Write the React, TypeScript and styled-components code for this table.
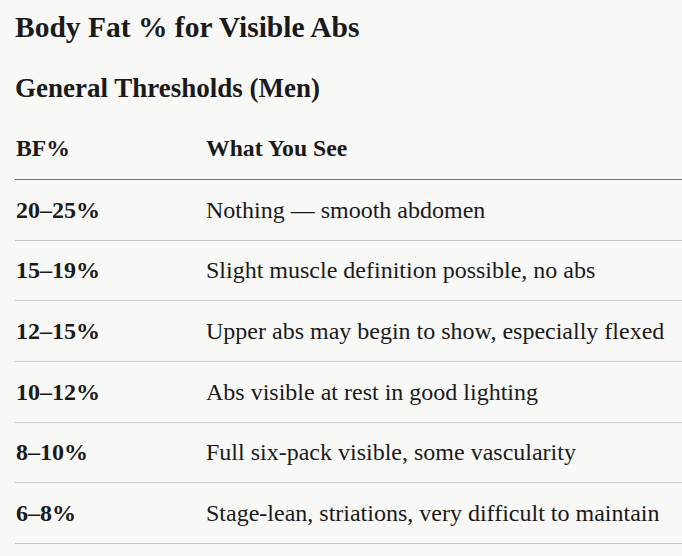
import React from "react";
import styled, { createGlobalStyle } from "styled-components";

const Global = createGlobalStyle`
  html, body { margin: 0; padding: 0; background: #f8f8f6; }
  body { font-family: "Liberation Serif", "DejaVu Serif", serif; color: #1a1a1a; }
`;

const Page = styled.div`
  padding: 9px 0 0 15px;
  overflow: hidden;
`;

const Title = styled.h1`
  margin: 0;
  font-size: 29.5px;
  font-weight: 700;
  line-height: 36px;
`;

const Subtitle = styled.h2`
  margin: 27px 0 0;
  font-size: 27px;
  font-weight: 700;
  line-height: 32px;
`;

const Table = styled.table`
  margin-top: 30px;
  width: 667px;
  border-collapse: collapse;
`;

const HeadCell = styled.th<{ $w?: number }>`
  text-align: left;
  font-size: 23.7px;
  font-weight: 700;
  line-height: 28px;
  padding: 0 0 17px 1px;
  vertical-align: top;
  border-bottom: 1px solid #747474;
  width: ${(p) => (p.$w ? `${p.$w}px` : "auto")};
`;

const Row = styled.tr`
  border-bottom: 1px solid #c8c8c6;
`;

const Cell = styled.td<{ $bold?: boolean }>`
  font-size: 24px;
  font-weight: ${(p) => (p.$bold ? 700 : 400)};
  line-height: 28px;
  height: 59.67px;
  padding: 0 0 0 1px;
  vertical-align: middle;
  white-space: nowrap;
`;

const rows: [string, string][] = [
  ["20–25%", "Nothing — smooth abdomen"],
  ["15–19%", "Slight muscle definition possible, no abs"],
  ["12–15%", "Upper abs may begin to show, especially flexed"],
  ["10–12%", "Abs visible at rest in good lighting"],
  ["8–10%", "Full six-pack visible, some vascularity"],
  ["6–8%", "Stage-lean, striations, very difficult to maintain"],
];

export default function App() {
  return (
    <Page>
      <Global />
      <Title>Body Fat % for Visible Abs</Title>
      <Subtitle>General Thresholds (Men)</Subtitle>
      <Table>
        <thead>
          <tr>
            <HeadCell $w={189}>BF%</HeadCell>
            <HeadCell>What You See</HeadCell>
          </tr>
        </thead>
        <tbody>
          {rows.map(([a, b]) => (
            <Row key={a}>
              <Cell $bold>{a}</Cell>
              <Cell>{b}</Cell>
            </Row>
          ))}
        </tbody>
      </Table>
    </Page>
  );
}
